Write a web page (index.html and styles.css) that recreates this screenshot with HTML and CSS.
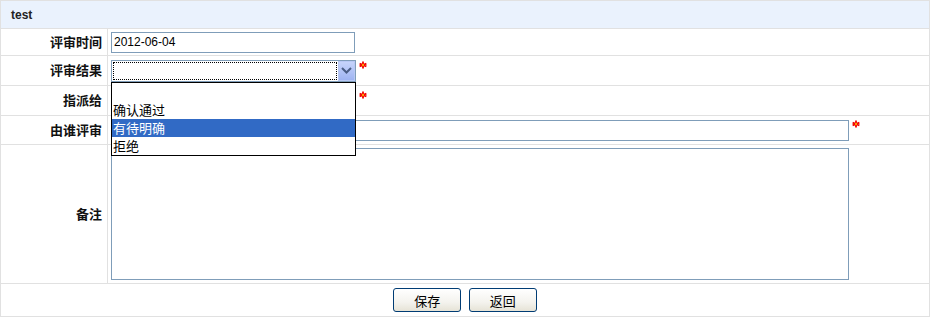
FILE: index.html
```html
<!DOCTYPE html>
<html lang="zh-CN">
<head>
    <meta charset="UTF-8">
    <title>test</title>
    <link rel="stylesheet" href="styles.css">
</head>
<body>

    <table class="form-table">
        <tr class="row-head">
            <td colspan="2">test</td>
        </tr>
        <tr class="row-date">
            <th>评审时间</th>
            <td class="field"><input type="text" class="txt txt-short" value="2012-06-04"></td>
        </tr>
        <tr class="row-result">
            <th>评审结果</th>
            <td class="field">
                <div class="combo">
                    <div class="combo-value"></div>
                    <div class="combo-arrow">
                        <svg width="11" height="7" viewBox="0 0 11 7"><path d="M1 1 L5.5 5.5 L10 1" fill="none" stroke="#4a5d85" stroke-width="2"/></svg>
                    </div>
                    <ul class="combo-list">
                        <li>&nbsp;</li>
                        <li>确认通过</li>
                        <li class="selected">有待明确</li>
                        <li>拒绝</li>
                    </ul>
                </div><span class="req"><svg width="8" height="8" viewBox="0 0 8 8"><path d="M4 0.5 V7.5 M0.6 2.6 L7.4 5.4 M7.4 2.6 L0.6 5.4" stroke="#f20000" stroke-width="1.8"/><circle cx="4" cy="4" r="1.2" fill="#ff9a00"/></svg></span>
            </td>
        </tr>
        <tr class="row-assign">
            <th>指派给</th>
            <td class="field"><span class="blank"></span><span class="req"><svg width="8" height="8" viewBox="0 0 8 8"><path d="M4 0.5 V7.5 M0.6 2.6 L7.4 5.4 M7.4 2.6 L0.6 5.4" stroke="#f20000" stroke-width="1.8"/><circle cx="4" cy="4" r="1.2" fill="#ff9a00"/></svg></span></td>
        </tr>
        <tr class="row-reviewer">
            <th>由谁评审</th>
            <td class="field"><input type="text" class="txt txt-long"><span class="req"><svg width="8" height="8" viewBox="0 0 8 8"><path d="M4 0.5 V7.5 M0.6 2.6 L7.4 5.4 M7.4 2.6 L0.6 5.4" stroke="#f20000" stroke-width="1.8"/><circle cx="4" cy="4" r="1.2" fill="#ff9a00"/></svg></span></td>
        </tr>
        <tr class="row-note">
            <th>备注</th>
            <td class="field"><textarea class="note"></textarea></td>
        </tr>
        <tr class="row-actions">
            <td colspan="2" class="actions">
                <button type="button" class="btn">保存</button>
                <button type="button" class="btn">返回</button>
            </td>
        </tr>
    </table>

</body>
</html>
```

FILE: styles.css
```css
body {
    margin: 0;
    font-family: "Liberation Sans", Arial, "Noto Sans CJK SC", sans-serif;
    font-size: 12px;
    color: #000;
}
.form-table {
    width: 930px;
    border-collapse: collapse;
}
.form-table td, .form-table th {
    border: 1px solid #e1e1e1;
    padding: 0;
}
.form-table th {
    width: 101px;
    padding-right: 5px;
    padding-bottom: 2px;
    text-align: right;
    font: bold 13px "Noto Sans CJK SC", sans-serif;
    color: #111;
}
.row-head td {
    height: 27px;
    background-color: #eaf2fd;
    font-weight: bold;
    padding-left: 10px;
    color: #222;
}
.row-date td { height: 26px; }
.row-result td { height: 29px; }
.row-assign td { height: 29px; }
.row-reviewer td { height: 28px; }
.row-note td { height: 138px; }
.row-actions td { height: 32px; }

.field {
    padding-left: 3px !important;
}
.txt {
    box-sizing: border-box;
    height: 21px;
    border: 1px solid #7f9db9;
    padding: 1px 2px;
    font-family: "Liberation Sans", Arial, sans-serif;
    font-size: 12px;
    vertical-align: middle;
    margin: 0;
}
.txt-short { width: 244px; }
.txt-long { width: 738px; }

.combo {
    position: relative;
    display: inline-block;
    vertical-align: middle;
    box-sizing: border-box;
    width: 245px;
    height: 22px;
    border: 1px solid #7f9db9;
    background: #fff;
}
.combo-value {
    position: absolute;
    left: 1px;
    top: 1px;
    width: 224px;
    height: 18px;
    box-sizing: border-box;
    border: 1px dotted #000;
}
.combo-arrow {
    position: absolute;
    right: 0;
    top: 0;
    width: 17px;
    height: 20px;
    box-sizing: border-box;
    border: 1px solid #b8c8f5;
    background: linear-gradient(#c6d4fb, #9fb4f2);
    display: flex;
    align-items: center;
    justify-content: center;
}
.combo-list {
    position: absolute;
    left: -1px;
    top: 21px;
    width: 245px;
    box-sizing: border-box;
    margin: 0;
    padding: 0;
    list-style: none;
    border: 1px solid #000;
    background: #fff;
    z-index: 2;
}
.combo-list li {
    height: 18px;
    padding-left: 1px;
    font: 13px "Noto Sans CJK SC", sans-serif;
    line-height: 18px;
}
.combo-list li.selected {
    background-color: #316ac5;
    color: #fff;
}
.blank {
    display: inline-block;
    width: 245px;
    height: 22px;
    vertical-align: middle;
}
.req {
    display: inline-block;
    vertical-align: middle;
    margin-left: 3px;
    position: relative;
    top: -6px;
}
.req svg {
    display: block;
}
.note {
    display: block;
    box-sizing: border-box;
    width: 738px;
    height: 132px;
    margin: 0;
    border: 1px solid #7f9db9;
    resize: none;
}
.actions {
    text-align: center;
}
.btn {
    width: 68px;
    height: 24px;
    margin: 0 2px;
    padding: 0;
    border: 1px solid #003c74;
    border-radius: 3px;
    background: linear-gradient(#ffffff, #f4f3ee 60%, #e6e3d6);
    font: 13px "Noto Sans CJK SC", sans-serif;
    color: #000;
    cursor: pointer;
    vertical-align: middle;
}
```
